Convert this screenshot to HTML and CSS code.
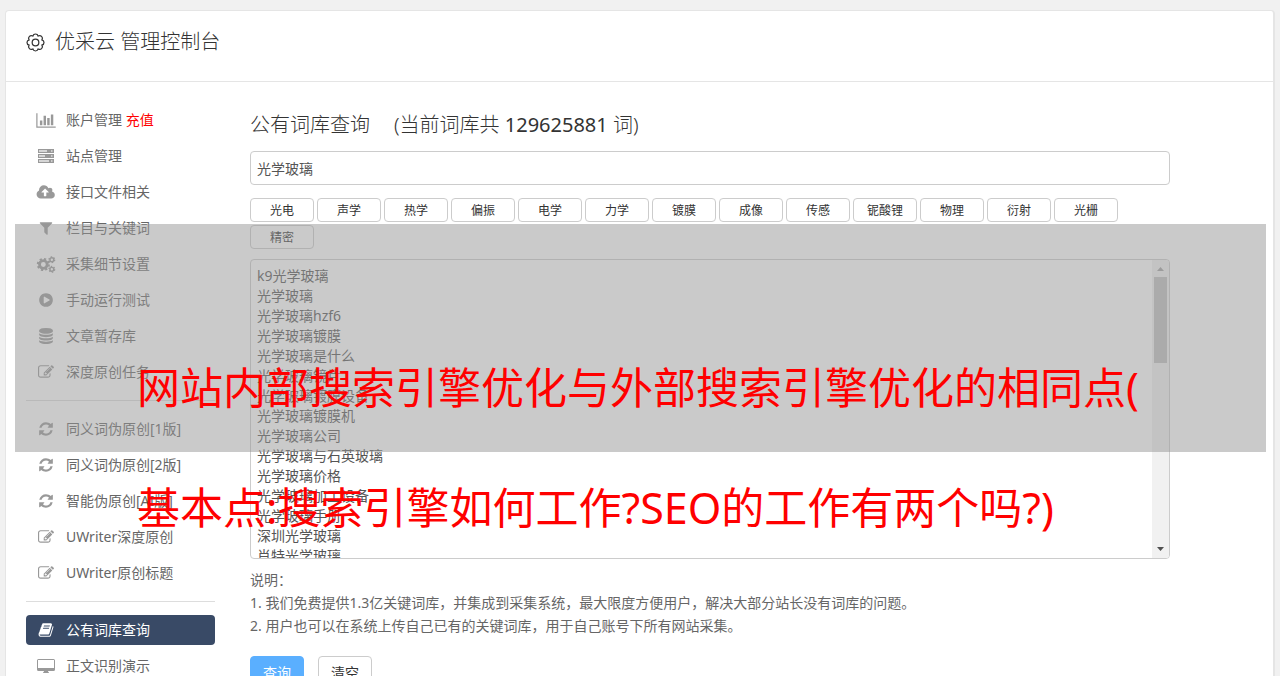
FILE: index.html
```html
<!DOCTYPE html>
<html lang="zh-CN">
<head>
    <meta charset="UTF-8">
    <meta name="viewport" content="width=device-width, initial-scale=1.0">
    <title>优采云 管理控制台</title>
    <link rel="stylesheet" href="styles.css">
</head>
<body>
    <!-- icons used more than once -->
    <svg class="sprite" aria-hidden="true">
        <symbol id="icon-edit" viewBox="0 0 1792 1792"><path d="M888 1184l116-116-152-152-116 116v56h96v96h56zm440-720q-16-16-33 1l-350 350q-17 17-1 33t33-1l350-350q17-17 1-33zm80 594v190q0 119-84.500 203.500t-203.500 84.500h-832q-119 0-203.500-84.500t-84.500-203.500v-832q0-119 84.500-203.500t203.500-84.500h832q63 0 117 25 15 7 18 23 3 17-9 29l-49 49q-14 14-32 8-23-6-45-6h-832q-66 0-113 47t-47 113v832q0 66 47 113t113 47h832q66 0 113-47t47-113v-126q0-13 9-22l64-64q15-15 35-7t20 29zm-96-738l288 288-672 672h-288v-288zm444 132l-92 92-288-288 92-92q28-28 68-28t68 28l152 152q28 28 28 68t-28 68z"/></symbol>
        <symbol id="icon-refresh" viewBox="0 0 1792 1792"><path d="M1639 1056q0 5-1 7-64 268-268 434.500t-478 166.500q-146 0-282.500-55t-243.500-157l-129 129q-19 19-45 19t-45-19-19-45v-448q0-26 19-45t45-19h448q26 0 45 19t19 45-19 45l-137 137q71 66 161 102t187 36q134 0 250-65t186-179q11-17 53-117 8-23 30-23h192q13 0 22.500 9.500t9.500 22.500zm25-800v448q0 26-19 45t-45 19h-448q-26 0-45-19t-19-45 19-45l138-138q-148-137-349-137-134 0-250 65t-186 179q-11 17-53 117-8 23-30 23h-199q-13 0-22.500-9.500t-9.500-22.500v-7q65-268 270-434.500t480-166.500q146 0 284 55.500t245 156.500l130-129q19-19 45-19t45 19 19 45z"/></symbol>
    </svg>

    <div class="card">
        <header class="card-header">
            <svg class="gear" viewBox="0 0 20 20" aria-hidden="true">
                <path d="M16.800 7.200a2.900 2.900 0 0 1 0 5.600a2.900 2.900 0 0 1-4 4a2.900 2.900 0 0 1-5.600 0a2.900 2.900 0 0 1-4-4a2.900 2.900 0 0 1 0-5.600a2.900 2.900 0 0 1 4-4a2.900 2.900 0 0 1 5.600 0a2.900 2.900 0 0 1 4 4z"/>
                <circle cx="10" cy="10" r="3.500"/>
            </svg>
            <h1>优采云 管理控制台</h1>
        </header>

        <div class="card-body">
            <nav class="sidebar">
                <a href="#"><svg class="icon icon-wide" viewBox="0 0 2048 1792"><path d="M640 896v512h-256v-512h256zm384-512v1024h-256v-1024h256zm1024 1152v128h-2048v-1536h128v1408h1920zm-640-896v768h-256v-768h256zm384-384v1152h-256v-1152h256z"/></svg><span>账户管理 <em>充值</em></span></a>
                <a href="#"><svg class="icon" viewBox="0 0 18 16"><path fill-rule="evenodd" d="M1 1h16v4H1zM2 2v2h8V2zM14 2.500v1h1.500v-1zM1 6h16v4H1zM2 7v2h6v-2zM14 7.500v1h1.500V7.500zM1 11h16v4H1zM2 12v2h10v-2zM14 12.500v1h1.500v-1z"/><path opacity=".4" d="M2 2h8v2H2zM2 7h6v2H2zM2 12h10v2H2z"/></svg><span>站点管理</span></a>
                <a href="#"><svg class="icon icon-wide" viewBox="0 0 1856 1792"><path d="M1216 864q0-14-9-23l-352-352q-9-9-23-9t-23 9l-351 351q-10 12-10 24 0 14 9 23t23 9h224v352q0 13 9.500 22.500t22.500 9.500h192q13 0 22.500-9.500t9.500-22.500v-352h224q13 0 22.500-9.500t9.500-22.500zm640 288q0 159-112.500 271.500t-271.500 112.500h-1088q-185 0-316.500-131.500t-131.500-316.500q0-130 70-240t188-165q-2-30-2-43 0-212 150-362t362-150q156 0 285.500 87t188.500 231q71-62 166-62 106 0 181 75t75 181q0 76-41 138 130 31 213.500 135.500t83.500 238.500z"/></svg><span>接口文件相关</span></a>
                <a href="#"><svg class="icon" viewBox="0 0 1792 1792"><path d="M1595 295q17 41-14 70l-493 493v742q0 42-39 59-13 5-25 5-27 0-45-19l-256-256q-19-19-19-45v-486l-493-493q-31-29-14-70 17-39 59-39h1280q42 0 59 39z"/></svg><span>栏目与关键词</span></a>
                <a href="#"><svg class="icon icon-wide" viewBox="0 0 18 16">
                    <g fill="none" stroke="currentColor">
                        <circle cx="6.500" cy="8" r="3.600" stroke-width="2.600"/>
                        <circle cx="6.500" cy="8" r="5.200" stroke-width="2" stroke-dasharray="2.040 2.044"/>
                        <circle cx="14.500" cy="3.500" r="1.800" stroke-width="1.400"/>
                        <circle cx="14.500" cy="3.500" r="2.700" stroke-width="1.200" stroke-dasharray="1.400 1.427"/>
                        <circle cx="14.500" cy="12.500" r="1.800" stroke-width="1.400"/>
                        <circle cx="14.500" cy="12.500" r="2.700" stroke-width="1.200" stroke-dasharray="1.400 1.427"/>
                    </g>
                </svg><span>采集细节设置</span></a>
                <a href="#"><svg class="icon" viewBox="0 0 1792 1792"><path d="M896 128q209 0 385.500 103t279.500 279.500 103 385.500-103 385.500-279.500 279.500-385.500 103-385.500-103-279.500-279.500-103-385.500 103-385.500 279.500-279.500 385.500-103zm384 823q32-18 32-55t-32-55l-544-320q-31-19-64-1-32 19-32 56v640q0 37 32 56 16 8 32 8 17 0 32-9z"/></svg><span>手动运行测试</span></a>
                <a href="#"><svg class="icon" viewBox="0 0 1792 1792"><path d="M896 768q237 0 443-43t325-127v170q0 69-103 128t-280 93.500-385 34.500-385-34.500-280-93.500-103-128v-170q119 84 325 127t443 43zm0 768q237 0 443-43t325-127v170q0 69-103 128t-280 93.500-385 34.500-385-34.500-280-93.500-103-128v-170q119 84 325 127t443 43zm0-384q237 0 443-43t325-127v170q0 69-103 128t-280 93.500-385 34.500-385-34.500-280-93.500-103-128v-170q119 84 325 127t443 43zm0-1152q208 0 385 34.500t280 93.500 103 128v128q0 69-103 128t-280 93.500-385 34.500-385-34.500-280-93.500-103-128v-128q0-69 103-128t280-93.500 385-34.500z"/></svg><span>文章暂存库</span></a>
                <a href="#"><svg class="icon"><use href="#icon-edit"/></svg><span>深度原创任务</span></a>
                <hr>
                <a href="#"><svg class="icon"><use href="#icon-refresh"/></svg><span>同义词伪原创[1版]</span></a>
                <a href="#"><svg class="icon"><use href="#icon-refresh"/></svg><span>同义词伪原创[2版]</span></a>
                <a href="#"><svg class="icon"><use href="#icon-refresh"/></svg><span>智能伪原创[AI版]</span></a>
                <a href="#"><svg class="icon"><use href="#icon-edit"/></svg><span>UWriter深度原创</span></a>
                <a href="#"><svg class="icon"><use href="#icon-edit"/></svg><span>UWriter原创标题</span></a>
                <hr>
                <a href="#" class="active"><svg class="icon" viewBox="0 0 1792 1792"><path d="M1703 478q40 57 18 129l-275 906q-19 64-76.500 107.500t-122.500 43.500h-923q-77 0-148.500-53.500t-99.500-131.500q-24-67-2-127 0-4 3-27t4-37q1-8-3-21.500t-3-19.500q2-11 8-21t16.500-23.500 16.500-23.500q23-38 45-91.500t30-91.500q3-10 .5-30t-.5-28q3-11 17-28t17-23q21-36 42-92t25-90q1-9-2.500-32t.5-28q4-13 22-30.500t22-22.500q19-26 42.500-84.500t27.500-96.500q1-8-3-25.500t-2-26.500q2-8 9-18t18-23 17-21q8-12 16.500-30.500t15-35 16-36 19.500-32 26.500-23.500 36-11.500 47.500 5.500l-1 3q38-9 51-9h761q74 0 114 56t18 130l-274 906q-36 119-71.500 153.500t-128.500 34.500h-869q-27 0-38 15-11 16-1 43 24 70 144 70h923q29 0 56-15.500t35-41.500l300-987q7-22 5-57 38 15 59 43zm-1064 2q-4 13 2 22.500t20 9.500h608q13 0 25.500-9.500t16.500-22.500l21-64q4-13-2-22.500t-20-9.500h-608q-13 0-25.500 9.500t-16.500 22.500zm-83 256q-4 13 2 22.500t20 9.500h608q13 0 25.500-9.500t16.500-22.500l21-64q4-13-2-22.500t-20-9.500h-608q-13 0-25.500 9.500t-16.500 22.500z"/></svg><span>公有词库查询</span></a>
                <a href="#"><svg class="icon" viewBox="0 0 18 16"><path fill-rule="evenodd" d="M1.500 1h15Q18 1 18 2.500v9q0 1.500-1.500 1.500H11q0 1 1 1.500v.5H6v-.5q1-.5 1-1.500H1.500Q0 13 0 11.500v-9Q0 1 1.500 1zM1 2v8h16V2z"/></svg><span>正文识别演示</span></a>
            </nav>

            <main class="content">
                <h2><label for="keyword">公有词库查询</label><span>(当前词库共 <b>129625881</b> 词)</span></h2>
                <input type="text" id="keyword" class="field" value="光学玻璃">

                <div class="tags">
                    <button type="button">光电</button>
                    <button type="button">声学</button>
                    <button type="button">热学</button>
                    <button type="button">偏振</button>
                    <button type="button">电学</button>
                    <button type="button">力学</button>
                    <button type="button">镀膜</button>
                    <button type="button">成像</button>
                    <button type="button">传感</button>
                    <button type="button">铌酸锂</button>
                    <button type="button">物理</button>
                    <button type="button">衍射</button>
                    <button type="button">光栅</button>
                    <button type="button">精密</button>
                </div>

                <div class="field words">
                    <textarea id="words">k9光学玻璃
光学玻璃
光学玻璃hzf6
光学玻璃镀膜
光学玻璃是什么
光学玻璃镜片
光学玻璃镀膜设备
光学玻璃镀膜机
光学玻璃公司
光学玻璃与石英玻璃
光学玻璃价格
光学玻璃加工设备
光学玻璃手册
深圳光学玻璃
肖特光学玻璃</textarea>
                    <div class="scrollbar" aria-hidden="true">
                        <svg viewBox="0 0 17 17"><path d="M5 11h7L8.500 7z" fill="#a3a3a3"/></svg>
                        <div class="thumb"></div>
                        <svg viewBox="0 0 17 17"><path d="M5 6h7L8.500 10z" fill="#505050"/></svg>
                    </div>
                </div>

                <div class="note">
                    <label for="words">说明：</label>
                    <p>1. 我们免费提供1.3亿关键词库，并集成到采集系统，最大限度方便用户，解决大部分站长没有词库的问题。</p>
                    <p>2. 用户也可以在系统上传自己已有的关键词库，用于自己账号下所有网站采集。</p>
                </div>

                <div class="actions">
                    <button type="submit" class="primary">查询</button>
                    <button type="reset">清空</button>
                </div>
            </main>
        </div>
    </div>

    <div class="banner">
        <p>网站内部搜索引擎优化与外部搜索引擎优化的相同点(</p>
        <p>基本点:搜索引擎如何工作?SEO的工作有两个吗?)</p>
    </div>
</body>
</html>
```

FILE: styles.css
```css
* {
    box-sizing: border-box;
}
body {
    margin: 0;
    padding: 10px 5px 0;
    height: 100vh;
    overflow: hidden;
    background: #f1f1f1;
    color: #333;
    font-family: "Noto Sans", "Noto Sans CJK SC", sans-serif;
    font-size: 14px;
    line-height: 20px;
}
h1, h2, p {
    margin: 0;
    font-weight: 400;
}
button, input, textarea {
    font: inherit;
    color: inherit;
}
.sprite {
    display: none;
}
.card {
    background: #fff;
    border: 1px solid #e5e5e5;
    border-right-width: 2px;
    border-radius: 4px;
}
.card-header {
    display: flex;
    align-items: center;
    gap: 10px;
    padding: 16px 20px 24px;
    border-bottom: 1px solid #e5e5e5;
}
.card-header h1 {
    font-size: 20px;
    font-weight: 300;
    line-height: 30px;
}
.gear {
    width: 19px;
    height: 19px;
    fill: none;
    stroke: #333;
    stroke-width: 1.3;
}
.card-body {
    display: flex;
    gap: 35px;
    padding: 23px 103px 20px 20px;
}

/* sidebar */
.sidebar {
    flex: 0 0 189px;
}
.sidebar a {
    display: flex;
    align-items: center;
    gap: 10px;
    height: 30px;
    margin-bottom: 6px;
    padding-left: 10px;
    border-radius: 4px;
    color: #666;
    text-decoration: none;
}
.sidebar em {
    color: #f00;
    font-style: normal;
}
.sidebar hr {
    height: 1px;
    margin: 13px 0;
    border: 0;
    background: #ddd;
}
.sidebar a.active {
    background: #394a66;
    color: #fff;
}
.icon {
    width: 20px;
    height: 16px;
    fill: currentColor;
    color: #999;
}
.icon-wide {
    height: 17px;
}
.active .icon {
    color: #fff;
}

/* main column */
.content {
    flex: 1;
    min-width: 0;
}
.content h2 {
    display: flex;
    gap: 24px;
    padding-top: 2px;
    margin-bottom: 9px;
    font-size: 20px;
    font-weight: 300;
    line-height: 35px;
}
.content h2 b {
    font-weight: 400;
}
.field {
    display: block;
    width: 100%;
    border: 1px solid #ccc;
    border-radius: 4px;
    background: #fff;
    color: #555;
    outline: none;
}
input.field {
    height: 34px;
    padding: 0 6px;
}
.tags {
    display: flex;
    flex-wrap: wrap;
    gap: 3px;
    margin: 13px 0 10px;
}
.tags button {
    width: 64px;
    height: 24px;
    padding: 2px 0 0;
    border: 1px solid #ccc;
    border-radius: 4px;
    background: #fff;
    font-size: 12px;
    line-height: 20px;
}
.words {
    display: flex;
    height: 300px;
    overflow: hidden;
}
.words textarea {
    flex: 1;
    padding: 6px 6px 0;
    border: 0;
    background: none;
    outline: none;
    resize: none;
    overflow: hidden;
}
.scrollbar {
    display: flex;
    flex-direction: column;
    width: 17px;
    background: #f1f1f1;
}
.scrollbar svg {
    width: 17px;
    height: 17px;
}
.scrollbar .thumb {
    height: 86px;
    margin: 0 2px auto;
    background: #c1c1c1;
}
.note {
    margin: 9px 0 19px;
    color: #666;
    line-height: 23px;
}
.note label {
    display: block;
}
.actions {
    display: flex;
    gap: 14px;
}
.actions button {
    width: 54px;
    height: 34px;
    padding: 0;
    border: 1px solid #ccc;
    border-radius: 4px;
    background: #fff;
}
.actions .primary {
    border-color: #5aafff;
    background: #5aafff;
    color: #fff;
}

/* title strip laid over the page */
.banner {
    position: absolute;
    top: 224px;
    left: 15px;
    right: 14px;
    height: 228px;
    padding: 104px 0 0 122px;
    background: rgba(150, 150, 150, 0.5);
    color: #f00;
    font-size: 43px;
    line-height: 120px;
    white-space: nowrap;
    pointer-events: none;
}
```
